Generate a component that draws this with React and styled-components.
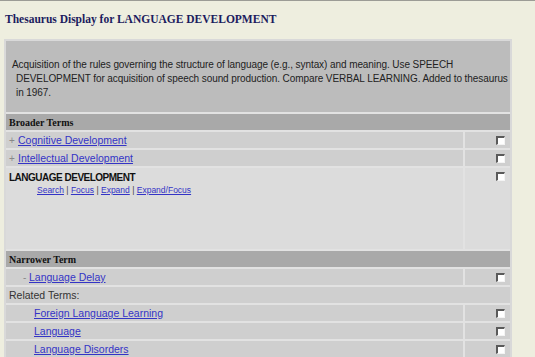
import React from 'react';
import styled, { createGlobalStyle } from 'styled-components';

const COLORS = {
    cream: '#eeeedf',
    navy: '#1c1c5e',
    link: '#3434c6',
    frame: '#d9d9d9',
    line: '#e2e2e2',
    desc: '#bcbcbc',
    head: '#a9a9a9',
    row: '#cfcfcf',
    block: '#dcdcdc',
};

const GlobalStyle = createGlobalStyle`
    html, body {
        margin: 0;
        padding: 0;
        background: ${COLORS.cream};
    }
    body {
        border-top: 1px solid #9c9c96;
        height: 356px;
        overflow: hidden;
    }
`;

const Page = styled.div`
    padding: 11px 0 0 4px;
`;

const Title = styled.h1`
    margin: 0 0 13px 1px;
    font-family: "Liberation Serif", "Times New Roman", serif;
    font-size: 11.5px;
    font-weight: bold;
    line-height: 14px;
    color: ${COLORS.navy};
`;

const Panel = styled.div`
    width: 504px;
    border: 2px solid ${COLORS.frame};
    background: ${COLORS.line};
    display: flex;
    flex-direction: column;
    gap: 2px;
`;

const Description = styled.div`
    height: 71px;
    box-sizing: border-box;
    padding: 17px 0 0 6px;
    background: ${COLORS.desc};
    font-family: "Liberation Sans", Arial, sans-serif;
    font-size: 10px;
    line-height: 14px;
    color: #222;
    letter-spacing: -0.08px;
`;

const DescLine = styled.div`
    white-space: nowrap;
    padding-left: ${p => p.$hang ? 4 : 0}px;
`;

const SectionHead = styled.div`
    height: 16px;
    background: ${COLORS.head};
    padding-left: 3px;
    display: flex;
    align-items: center;
    font-family: "Liberation Serif", "Times New Roman", serif;
    font-weight: bold;
    font-size: 10px;
    color: #111;
`;

const Row = styled.div`
    display: grid;
    grid-template-columns: 457px 45px;
    column-gap: 2px;
    height: ${p => p.$tall ? '81px' : '16px'};
`;

const Cell = styled.div`
    background: ${p => p.$light ? COLORS.block : COLORS.row};
    display: flex;
    align-items: ${p => p.$top ? 'flex-start' : 'center'};
    flex-direction: ${p => p.$top ? 'column' : 'row'};
    padding-left: ${p => p.$indent || 3}px;
    font-family: "Liberation Sans", Arial, sans-serif;
    font-size: 10.5px;
    color: #333;
    overflow: hidden;
`;

const Full = styled(Cell)`
    height: 16px;
`;

const Mark = styled.span`
    color: #888;
    font-size: 10px;
    width: ${p => p.$w}px;
`;

const TermLink = styled.a`
    color: ${COLORS.link};
    text-decoration: underline;
    cursor: pointer;
`;

const CheckCell = styled.div`
    background: ${p => p.$light ? COLORS.block : COLORS.row};
    display: flex;
    justify-content: flex-end;
    padding: 4px 5px 0 0;
`;

const Check = styled.span`
    box-sizing: border-box;
    width: 9px;
    height: 9px;
    background: #fff;
    border-top: 2px solid #5a5a5a;
    border-left: 2px solid #5a5a5a;
    border-right: 1px solid #f4f4f4;
    border-bottom: 1px solid #f4f4f4;
`;

const Current = styled.div`
    margin-top: 3px;
    font-weight: bold;
    font-size: 10px;
    letter-spacing: -0.5px;
    color: #111;
    line-height: 13px;
`;

const Actions = styled.div`
    padding-left: 28px;
    font-size: 8.5px;
    line-height: 12px;
    color: #444;
    & a {
        color: ${COLORS.link};
        text-decoration: underline;
    }
`;

const TermRow = ({ mark, markWidth, indent, children }) => (
    <Row>
        <Cell $indent={indent}>
            {mark && <Mark $w={markWidth}>{mark}</Mark>}
            <TermLink>{children}</TermLink>
        </Cell>
        <CheckCell><Check /></CheckCell>
    </Row>
);

const App = () => {
    return (
        <Page>
            <GlobalStyle />
            <Title>Thesaurus Display for LANGUAGE DEVELOPMENT</Title>
            <Panel>
                <Description>
                    <DescLine>Acquisition of the rules governing the structure of language (e.g., syntax) and meaning. Use SPEECH</DescLine>
                    <DescLine $hang>DEVELOPMENT for acquisition of speech sound production. Compare VERBAL LEARNING. Added to thesaurus</DescLine>
                    <DescLine $hang>in 1967.</DescLine>
                </Description>
                <SectionHead>Broader Terms</SectionHead>
                <TermRow mark="+" markWidth={9} indent={3}>Cognitive Development</TermRow>
                <TermRow mark="+" markWidth={9} indent={3}>Intellectual Development</TermRow>
                <Row $tall>
                    <Cell $light $top $indent={3}>
                        <Current>LANGUAGE DEVELOPMENT</Current>
                        <Actions>
                            <a>Search</a> | <a>Focus</a> | <a>Expand</a> | <a>Expand/Focus</a>
                        </Actions>
                    </Cell>
                    <CheckCell $light><Check /></CheckCell>
                </Row>
                <SectionHead>Narrower Term</SectionHead>
                <TermRow mark="-" markWidth={6} indent={17}>Language Delay</TermRow>
                <Full $indent={3}>Related Terms:</Full>
                <TermRow indent={28}>Foreign Language Learning</TermRow>
                <TermRow indent={28}>Language</TermRow>
                <TermRow indent={28}>Language Disorders</TermRow>
            </Panel>
        </Page>
    );
};

export default App;
